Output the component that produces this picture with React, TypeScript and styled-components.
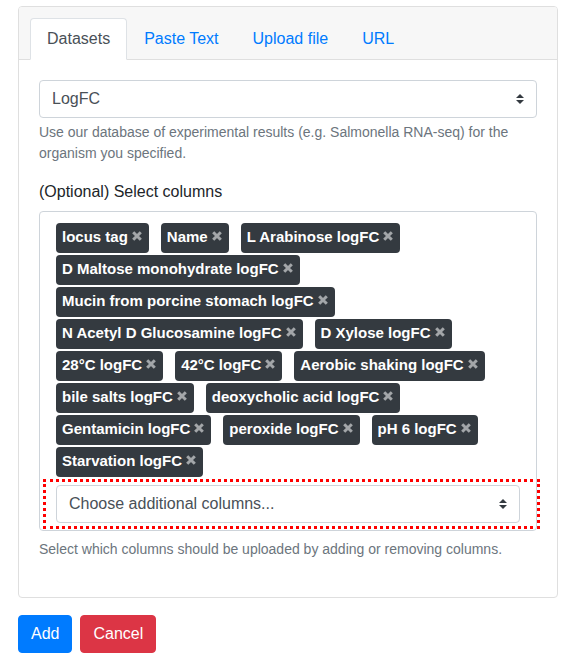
import styled, { createGlobalStyle } from "styled-components";

const GlobalStyle = createGlobalStyle`
  body {
    margin: 0;
    font-family: "Liberation Sans", Arial, sans-serif;
    color: #212529;
    background: #fff;
  }
  * {
    box-sizing: border-box;
  }
`;

const columns = [
  "locus tag",
  "Name",
  "L Arabinose logFC",
  "D Maltose monohydrate logFC",
  "Mucin from porcine stomach logFC",
  "N Acetyl D Glucosamine logFC",
  "D Xylose logFC",
  "28°C logFC",
  "42°C logFC",
  "Aerobic shaking logFC",
  "bile salts logFC",
  "deoxycholic acid logFC",
  "Gentamicin logFC",
  "peroxide logFC",
  "pH 6 logFC",
  "Starvation logFC",
];

const tabs = ["Datasets", "Paste Text", "Upload file", "URL"];

function RemoveIcon() {
  return (
    <svg width="10" height="10" viewBox="0 0 10 10">
      <path
        d="M1.2 1.2L8.8 8.8M8.8 1.2L1.2 8.8"
        stroke="#a3a6a9"
        strokeWidth="3"
        strokeLinecap="butt"
      />
    </svg>
  );
}

export default function App() {
  return (
    <Page>
      <GlobalStyle />
      <Card>
        <CardHeader>
          <Tabs>
            {tabs.map((tab, i) => (
              <Tab key={tab} active={i === 0}>
                {tab}
              </Tab>
            ))}
          </Tabs>
        </CardHeader>

        <CardBody>
          <FormGroup>
            <Select defaultValue="LogFC">
              <option>LogFC</option>
            </Select>
            <HelpText>
              Use our database of experimental results (e.g. Salmonella
              RNA-seq) for the organism you specified.
            </HelpText>
          </FormGroup>

          <FormGroup>
            <Label>(Optional) Select columns</Label>
            <TagBox>
              <TagList>
                {columns.map((col) => (
                  <Tag key={col}>
                    {col}
                    <RemoveButton>
                      <RemoveIcon />
                    </RemoveButton>
                  </Tag>
                ))}
              </TagList>
              <Highlight>
                <Select defaultValue="">
                  <option value="">Choose additional columns...</option>
                </Select>
              </Highlight>
            </TagBox>
            <HelpText wide>
              Select which columns should be uploaded by adding or removing
              columns.
            </HelpText>
          </FormGroup>
        </CardBody>
      </Card>

      <Actions>
        <Button variant="primary">Add</Button>
        <Button variant="danger">Cancel</Button>
      </Actions>
    </Page>
  );
}

const Page = styled.div`
  padding: 6px 23px 0 18px;
`;

const Card = styled.div`
  border: 1px solid #dfdfdf;
  border-radius: 4px;
  background: #fff;
`;

const CardHeader = styled.div`
  background: #f7f7f7;
  border-bottom: 1px solid #dfdfdf;
  border-radius: 3px 3px 0 0;
  padding: 11px 20px 0 11px;
`;

const Tabs = styled.div`
  display: flex;
  margin-bottom: -1px;
`;

const Tab = styled.a<{ active?: boolean }>`
  display: block;
  padding: 8px 16px;
  font-size: 16px;
  line-height: 24px;
  border: 1px solid ${({ active }) => (active ? "#dee2e6" : "transparent")};
  border-bottom-color: ${({ active }) => (active ? "#fff" : "transparent")};
  border-radius: 4px 4px 0 0;
  background: ${({ active }) => (active ? "#fff" : "transparent")};
  color: ${({ active }) => (active ? "#495057" : "#007bff")};
  cursor: pointer;
`;

const CardBody = styled.div`
  padding: 20px 20px 21px;
`;

const FormGroup = styled.div`
  margin-bottom: 16px;
`;

const Select = styled.select`
  display: block;
  width: 100%;
  height: 38px;
  padding: 6px 28px 6px 12px;
  font-family: inherit;
  font-size: 16px;
  line-height: 24px;
  color: #495057;
  background: #fff
    url("data:image/svg+xml,%3csvg xmlns='http://www.w3.org/2000/svg' width='4' height='5' viewBox='0 0 4 5'%3e%3cpath fill='%23343a40' d='M2 0L0 2h4zm0 5L0 3h4z'/%3e%3c/svg%3e")
    no-repeat right 12px center / 8px 10px;
  border: 1px solid #ced4da;
  border-radius: 4px;
  appearance: none;
`;

const HelpText = styled.small<{ wide?: boolean }>`
  display: block;
  margin-top: ${({ wide }) => (wide ? "8px" : "4px")};
  font-size: 14px;
  line-height: 21px;
  color: #6c757d;
`;

const Label = styled.label`
  display: block;
  margin-bottom: 7px;
  font-size: 16px;
  line-height: 24px;
`;

const TagBox = styled.div`
  border: 1px solid #ced4da;
  border-radius: 4px;
  padding: 11px 16px 1px;
`;

const TagList = styled.div`
  display: flex;
  flex-wrap: wrap;
  column-gap: 12px;
  row-gap: 2px;
`;

const Tag = styled.span`
  display: inline-flex;
  align-items: center;
  height: 30px;
  padding: 0 7px 3px 6px;
  background: #343a40;
  color: #fff;
  border-radius: 4px;
  font-size: 15px;
  font-weight: 700;
  white-space: nowrap;
`;

const RemoveButton = styled.span`
  display: inline-flex;
  margin-left: 4px;
  margin-top: -1px;
  cursor: pointer;
`;

const Highlight = styled.div`
  margin: 2px -20px 0 -13px;
  padding: 3px 17px 3px 10px;
  border: 3px dotted #ff0000;
`;

const Actions = styled.div`
  display: flex;
  gap: 8px;
  margin-top: 17px;
`;

const Button = styled.button<{ variant: "primary" | "danger" }>`
  height: 38px;
  padding: 6px 12px;
  font-family: inherit;
  font-size: 16px;
  line-height: 24px;
  color: #fff;
  background: ${({ variant }) => (variant === "primary" ? "#007bff" : "#dc3545")};
  border: 1px solid
    ${({ variant }) => (variant === "primary" ? "#007bff" : "#dc3545")};
  border-radius: 4px;
  cursor: pointer;
`;
